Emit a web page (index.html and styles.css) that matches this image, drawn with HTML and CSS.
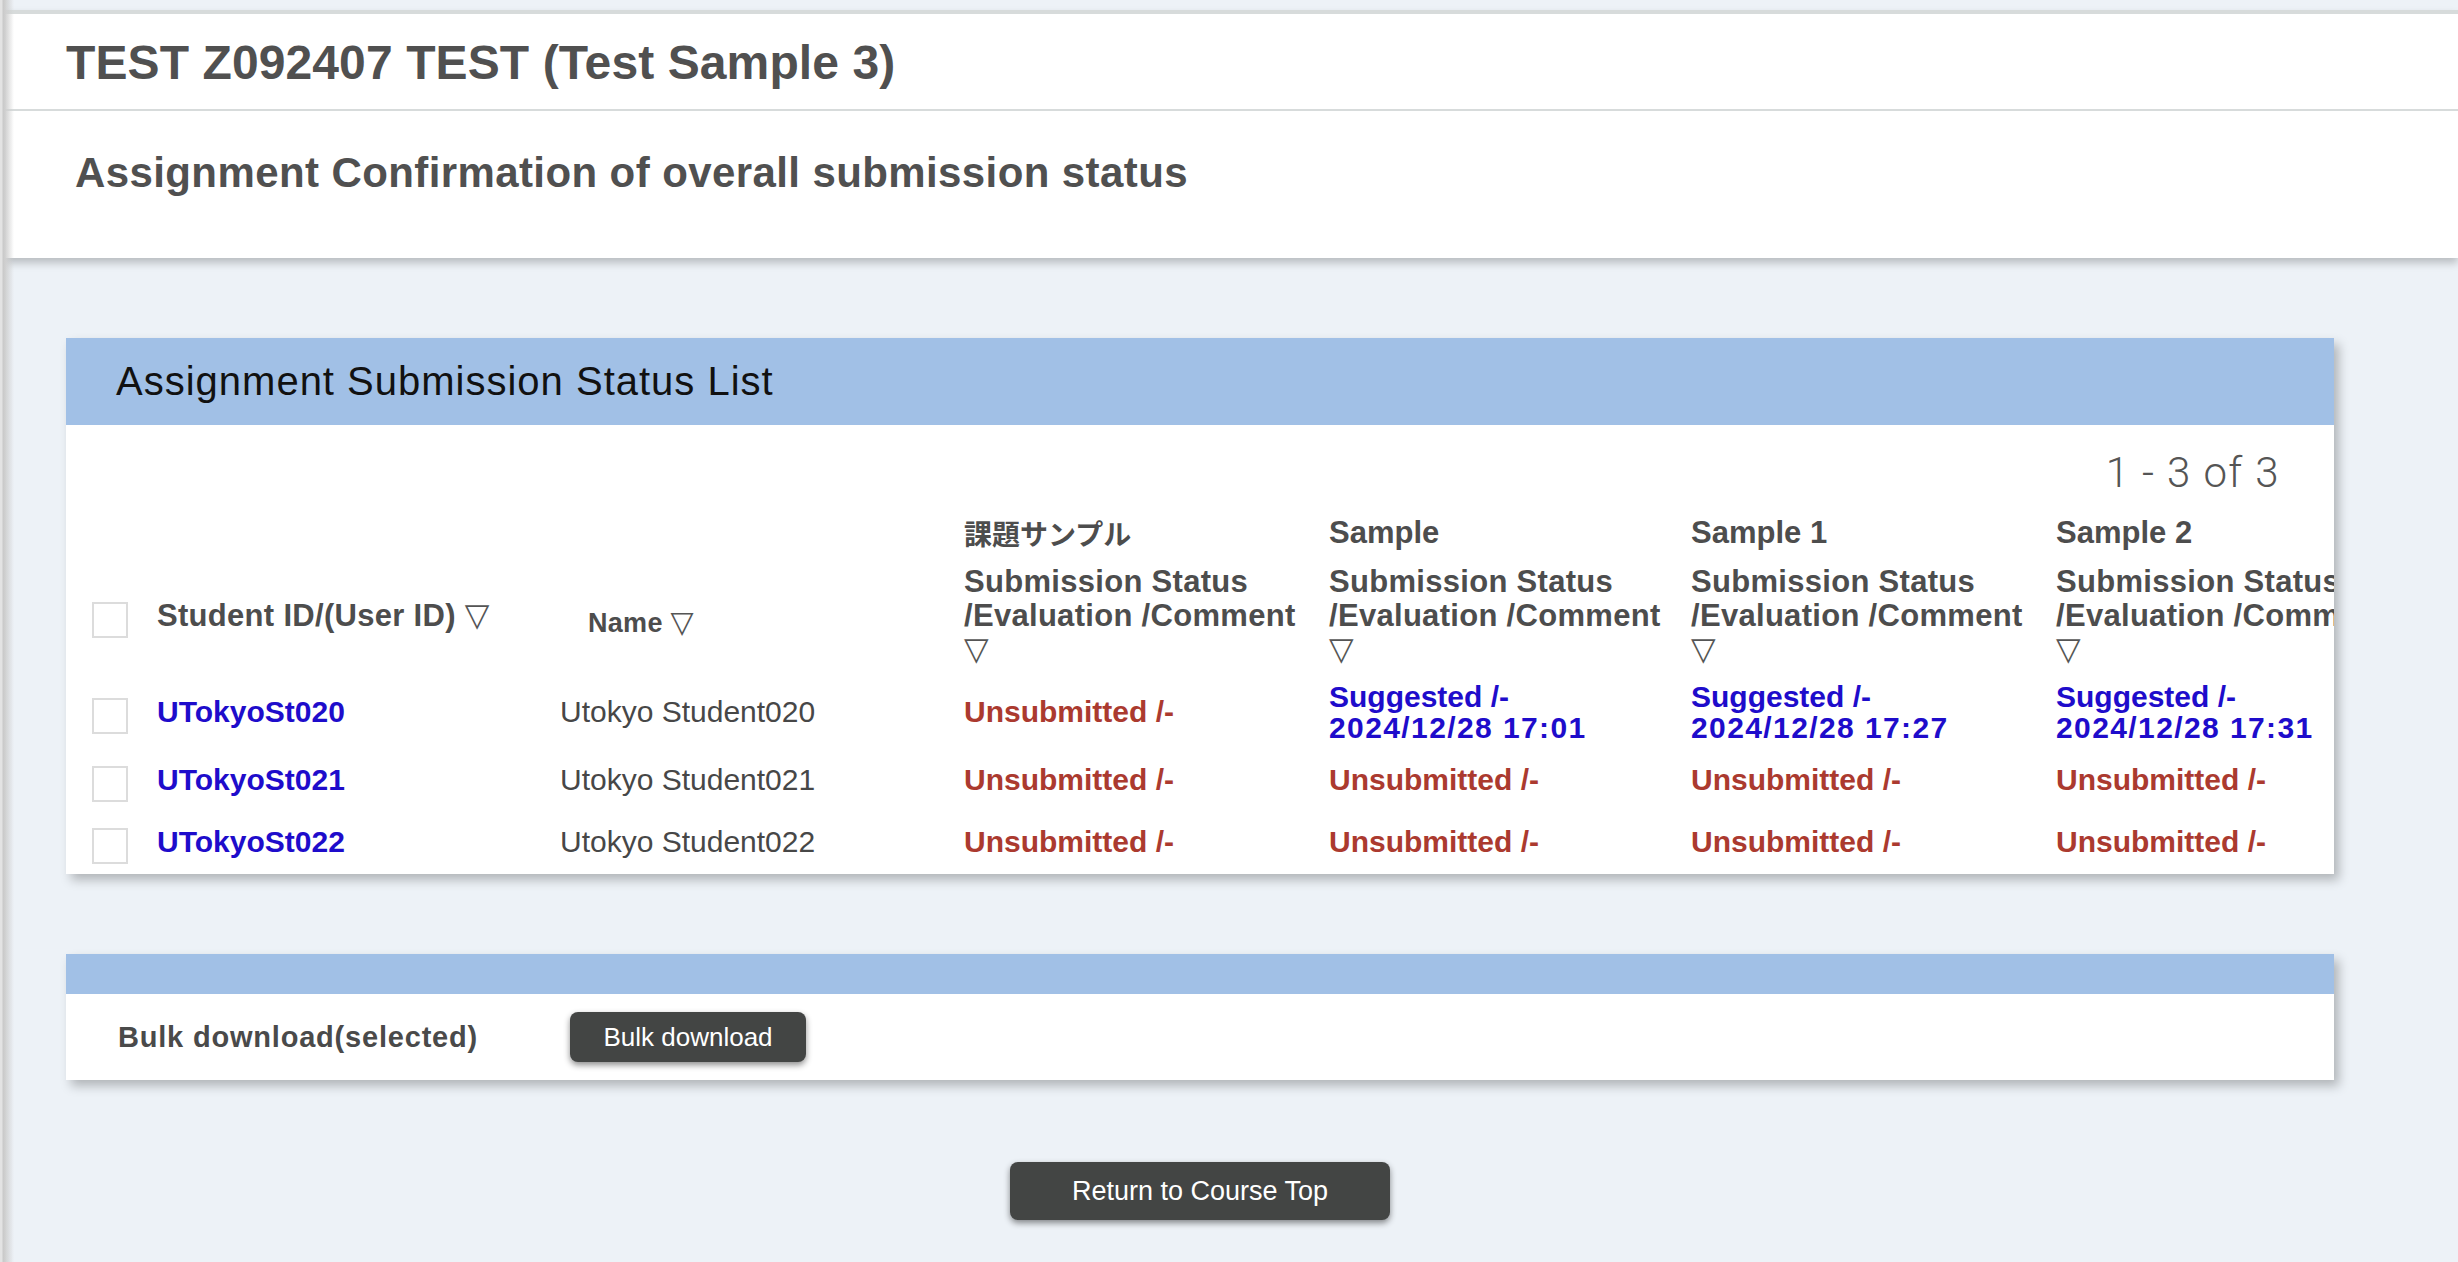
FILE: index.html
```html
<!DOCTYPE html>
<html lang="en">
<head>
<meta charset="utf-8">
<title>Assignment Submission Status</title>
<link rel="stylesheet" href="styles.css">
</head>
<body>
<div class="page-edge"></div>
<div class="top-strip"></div>
<header class="page-header">
  <div class="course-title"><h1>TEST Z092407 TEST (Test Sample 3)</h1></div>
  <div class="page-subtitle"><h2>Assignment Confirmation of overall submission status</h2></div>
</header>

<main class="main">
  <section class="card">
    <div class="card-head">Assignment Submission Status List</div>
    <div class="card-body">
      <div class="pager">1 - 3 of 3</div>
      <div class="status-grid">
        <div class="cell-a"></div>
        <div class="cell-a"></div>
        <div class="cell-a"></div>
        <div class="cell-a sample jp">課題サンプル</div>
        <div class="cell-a sample">Sample</div>
        <div class="cell-a sample">Sample 1</div>
        <div class="cell-a sample">Sample 2</div>

        <div class="cell-b"><input type="checkbox" class="check check-head"></div>
        <div class="cell-b head"><div>Student ID/(User ID) <span class="sort">▽</span></div></div>
        <div class="cell-b head name-head"><div>Name <span class="sort">▽</span></div></div>
        <div class="cell-b head"><div>Submission Status<br>/Evaluation /Comment<br><span class="sort">▽</span></div></div>
        <div class="cell-b head"><div>Submission Status<br>/Evaluation /Comment<br><span class="sort">▽</span></div></div>
        <div class="cell-b head"><div>Submission Status<br>/Evaluation /Comment<br><span class="sort">▽</span></div></div>
        <div class="cell-b head"><div>Submission Status<br>/Evaluation /Comment<br><span class="sort">▽</span></div></div>

        <div class="cell"><input type="checkbox" class="check"></div>
        <div class="cell"><a class="uid" href="#">UTokyoSt020</a></div>
        <div class="cell name">Utokyo Student020</div>
        <div class="cell st-un">Unsubmitted /-</div>
        <div class="cell st-sg"><div>Suggested /-<br><span class="date">2024/12/28 17:01</span></div></div>
        <div class="cell st-sg"><div>Suggested /-<br><span class="date">2024/12/28 17:27</span></div></div>
        <div class="cell st-sg"><div>Suggested /-<br><span class="date">2024/12/28 17:31</span></div></div>

        <div class="cell"><input type="checkbox" class="check"></div>
        <div class="cell"><a class="uid" href="#">UTokyoSt021</a></div>
        <div class="cell name">Utokyo Student021</div>
        <div class="cell st-un">Unsubmitted /-</div>
        <div class="cell st-un">Unsubmitted /-</div>
        <div class="cell st-un">Unsubmitted /-</div>
        <div class="cell st-un">Unsubmitted /-</div>

        <div class="cell"><input type="checkbox" class="check"></div>
        <div class="cell"><a class="uid" href="#">UTokyoSt022</a></div>
        <div class="cell name">Utokyo Student022</div>
        <div class="cell st-un">Unsubmitted /-</div>
        <div class="cell st-un">Unsubmitted /-</div>
        <div class="cell st-un">Unsubmitted /-</div>
        <div class="cell st-un">Unsubmitted /-</div>
      </div>
    </div>
  </section>

  <section class="card bulk-card">
    <div class="card-strip"></div>
    <div class="bulk-row">
      <span class="bulk-label">Bulk download(selected)</span>
      <button class="btn btn-bulk" type="button">Bulk download</button>
    </div>
  </section>

  <div class="return-wrap">
    <button class="btn btn-return" type="button">Return to Course Top</button>
  </div>
</main>
</body>
</html>
```

FILE: styles.css
```css
* {
  box-sizing: border-box;
}

html, body {
  height: 100%;
}

body {
  margin: 0;
  background: #edf2f7;
  font-family: "Liberation Sans", "Noto Sans CJK JP", sans-serif;
  overflow: hidden;
}

.page-edge {
  position: fixed;
  left: 0;
  top: 0;
  bottom: 0;
  width: 14px;
  z-index: 10;
  pointer-events: none;
  background: linear-gradient(to right,
    #e3e3e3 0px, #e3e3e3 2px,
    #c9c9c9 3px, #cfcfcf 5px,
    rgba(210, 210, 210, 0) 14px);
}

.top-strip {
  height: 10px;
}

.page-header {
  background: #fff;
  border-top: 4px solid #d7dbdb;
  box-shadow: 0 5px 8px rgba(0, 0, 0, 0.22);
}

.course-title {
  height: 97px;
  padding: 25px 0 0 66px;
  border-bottom: 2px solid #d7dbdb;
}

.course-title h1 {
  margin: 0;
  font-size: 48px;
  line-height: 48px;
  font-weight: 700;
  letter-spacing: 0.1px;
  color: #505050;
}

.page-subtitle {
  height: 147px;
  padding: 41px 0 0 75px;
}

.page-subtitle h2 {
  margin: 0;
  font-size: 42px;
  line-height: 42px;
  font-weight: 700;
  letter-spacing: 0.4px;
  color: #505050;
}

.main {
  padding: 80px 124px 0 66px;
}

.card {
  background: #fff;
  box-shadow: 5px 6px 10px rgba(0, 0, 0, 0.25);
}

.card-head {
  height: 87px;
  background: #a1c0e6;
  display: flex;
  align-items: center;
  padding-left: 50px;
  font-size: 40px;
  letter-spacing: 1px;
  color: #111;
}

.card-body {
  overflow: hidden;
  padding: 27px 0 2px 26px;
}

.pager {
  text-align: right;
  padding-right: 54px;
  font-family: "Roboto", "Liberation Sans", sans-serif;
  font-weight: 300;
  font-size: 42px;
  line-height: 42px;
  letter-spacing: 1.4px;
  color: #555;
}

.status-grid {
  margin-top: 22px;
  display: grid;
  grid-template-columns: 65px 403px 404px 365px 362px 365px 365px;
  grid-template-rows: 49px 110px 73px 62px 62px;
  width: max-content;
  color: #4d4d4d;
}

.cell-a {
  align-self: start;
  font-size: 31px;
  line-height: 34px;
  font-weight: 700;
}

.sample.jp {
  font-family: "Noto Sans CJK JP", "Liberation Sans", sans-serif;
  font-size: 28px;
}

.cell-b {
  height: 102px;
  display: flex;
  align-items: center;
  white-space: nowrap;
}

.head {
  font-size: 31px;
  line-height: 34px;
  font-weight: 700;
  letter-spacing: 0.3px;
}

.name-head {
  font-size: 27px;
  padding: 14px 0 0 28px;
}

.sort {
  font-family: "DejaVu Sans", sans-serif;
  font-weight: 400;
  font-size: 32px;
  line-height: 1;
  color: #555;
}

.name-head .sort {
  font-size: 30px;
}

.cell {
  display: flex;
  align-items: center;
  font-size: 30px;
  line-height: 31px;
  font-weight: 700;
  white-space: nowrap;
}

.check {
  appearance: none;
  -webkit-appearance: none;
  width: 36px;
  height: 36px;
  margin: 9px 0 0 0;
  border: 2px solid #dcdcdc;
  background: #fff;
  border-radius: 0;
}

.check-head {
  margin-top: 7px;
}

.uid {
  color: #1e0ccb;
  text-decoration: none;
}

.name {
  font-weight: 400;
  color: #474747;
}

.st-un {
  color: #ab3a2f;
}

.st-sg {
  color: #1e0ccb;
}

.date {
  letter-spacing: 1.4px;
}

.bulk-card {
  margin-top: 80px;
}

.card-strip {
  height: 40px;
  background: #a1c0e6;
}

.bulk-row {
  height: 86px;
  display: flex;
  align-items: center;
  padding-left: 52px;
}

.bulk-label {
  width: 452px;
  font-size: 29px;
  font-weight: 700;
  letter-spacing: 0.8px;
  color: #4a4a4a;
}

.btn {
  border: none;
  border-radius: 8px;
  background: #434544;
  color: #fff;
  font-family: "Liberation Sans", sans-serif;
  box-shadow: 0 3px 6px rgba(0, 0, 0, 0.45);
  padding: 0;
  cursor: pointer;
}

.btn-bulk {
  width: 236px;
  height: 50px;
  font-size: 26px;
}

.return-wrap {
  display: flex;
  justify-content: center;
  margin-top: 82px;
}

.btn-return {
  width: 380px;
  height: 58px;
  font-size: 27px;
}
```
